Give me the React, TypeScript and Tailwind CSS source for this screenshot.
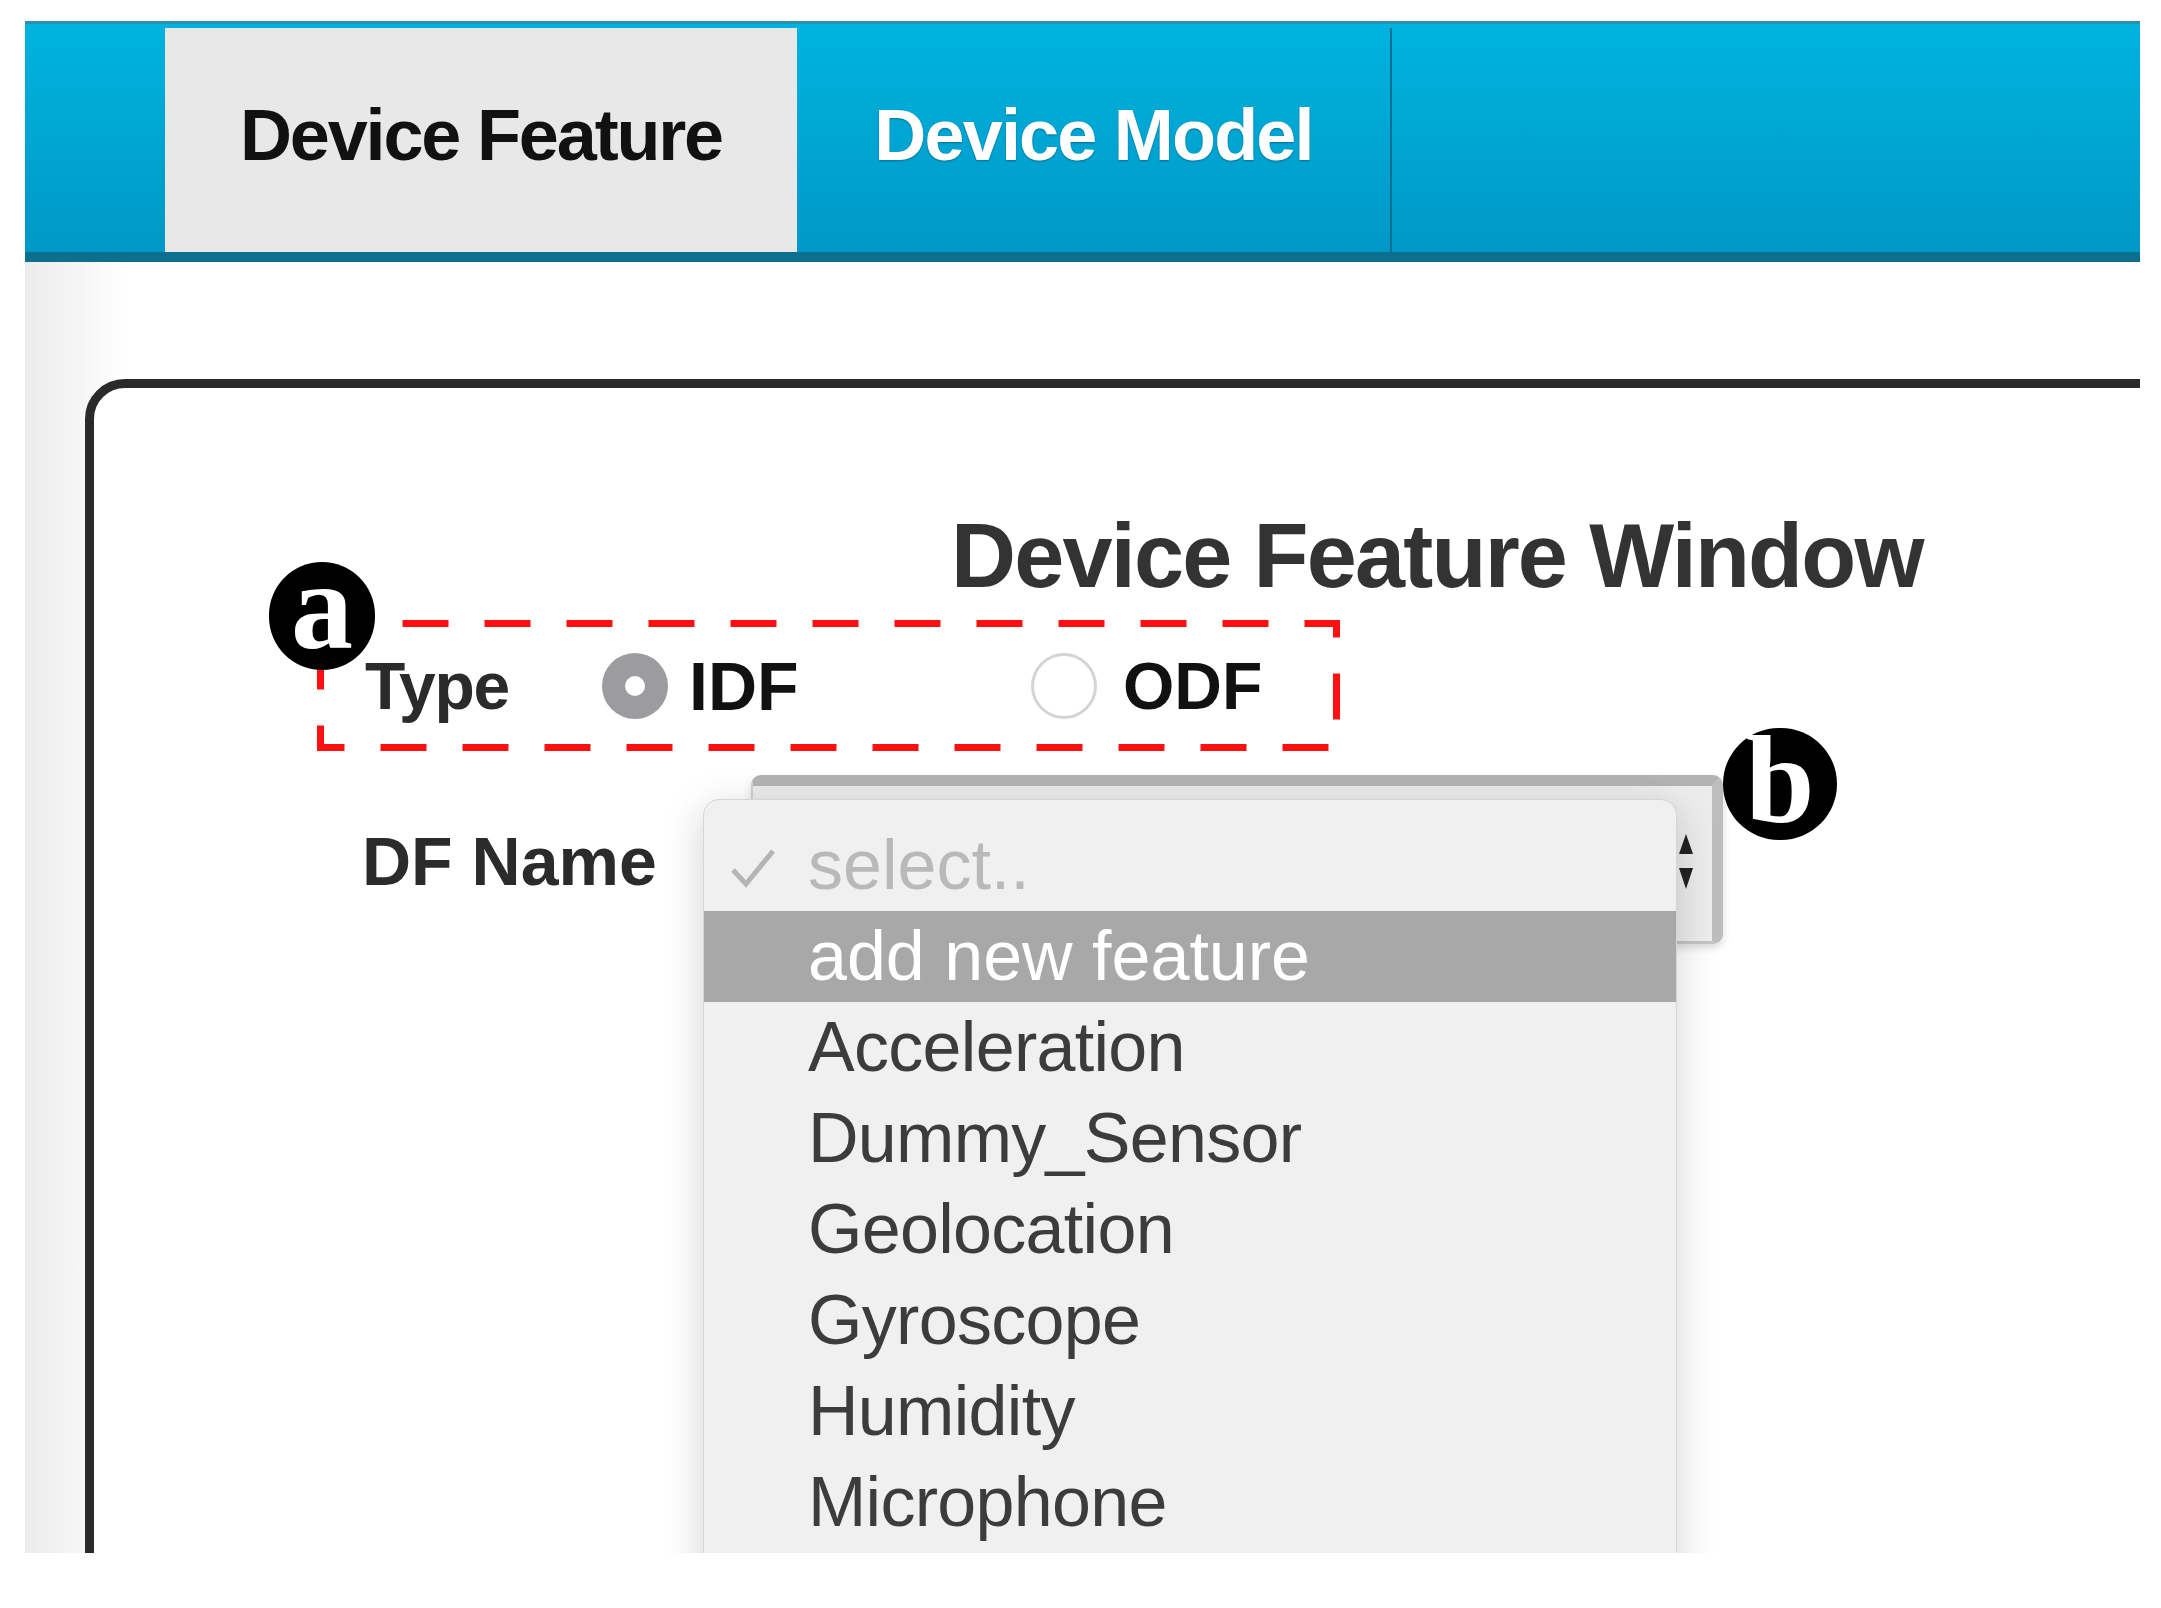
import React from "react";

const SANS = "font-['Liberation_Sans',Arial,sans-serif]";
const SERIF = "font-['Liberation_Serif','Times_New_Roman',serif]";

const FEATURES = [
  "Acceleration",
  "Dummy_Sensor",
  "Geolocation",
  "Gyroscope",
  "Humidity",
  "Microphone",
];

// circled letter used as a figure annotation
const Badge: React.FC<{ letter: string; className?: string }> = ({ letter, className }) => (
  <div
    className={`absolute z-20 flex items-center justify-center rounded-full bg-black text-white font-bold leading-none ${SERIF} ${className ?? ""}`}
  >
    {letter}
  </div>
);

const App: React.FC = () => {
  return (
    <div className={`w-[2161px] h-[1608px] bg-white pl-[25px] pt-[21px] ${SANS}`}>
      <div className="w-[2115px] h-[1532px] overflow-hidden flex flex-col">
        {/* ------------ TOP NAV ------------ */}
        <nav className="h-[241px] shrink-0 flex items-stretch pl-[140px] pt-[4px] border-t-[3px] border-b-[10px] border-t-[#2b8fb0] border-b-[#0b6f8f] bg-linear-to-b from-[#00b3df] to-[#0098c7]">
          <div className="w-[632px] bg-[#e8e8e8] flex items-center justify-center pb-[10px]">
            <span className="text-[72px] font-bold tracking-[-0.03em] text-[#111]">Device Feature</span>
          </div>
          <div className="w-[595px] flex items-center justify-center pb-[10px] border-r-2 border-[#0b6f8f]">
            <span className="text-[72px] font-bold tracking-[-0.025em] text-white [text-shadow:0_1px_2px_rgba(0,60,90,0.5)]">
              Device Model
            </span>
          </div>
        </nav>

        {/* ------------ BODY ------------ */}
        <main className="flex-1 pl-[60px] pt-[117px] bg-linear-to-r from-[#ececec] to-white to-5%">
          <section className="w-[2300px] h-[1400px] bg-white border-[9px] border-[#2a2a2a] rounded-tl-[40px] pl-[223px] flex flex-col">
            {/* Title */}
            <h1 className="ml-[634px] mt-[123px] text-[90px] leading-none font-bold tracking-[-0.02em] text-[#333]">
              Device Feature Window
            </h1>

            {/* Type row (a) */}
            <div className="relative mt-[19px] w-[1023px] h-[131px] flex items-center pl-[48px]">
              <svg className="absolute inset-0 pointer-events-none" width="1023" height="131">
                <rect
                  x="3.5"
                  y="3.5"
                  width="1016"
                  height="124"
                  fill="none"
                  stroke="#ff1010"
                  strokeWidth="7"
                  strokeDasharray="46 36"
                />
              </svg>
              <Badge letter="a" className="left-[-48px] top-[-58px] w-[106px] h-[108px] text-[124px] pb-[18px]" />

              <span className="w-[237px] text-[66px] leading-none font-bold tracking-[-0.02em] text-[#2b2b2b]">Type</span>
              <label className="w-[429px] flex items-center">
                <span className="w-[66px] h-[66px] rounded-full bg-[#9c9ca0] flex items-center justify-center">
                  <span className="w-[20px] h-[20px] rounded-full bg-white" />
                </span>
                <span className="ml-[21px] text-[68px] leading-none font-bold text-[#111]">IDF</span>
              </label>
              <label className="flex items-center">
                <span className="w-[66px] h-[66px] rounded-full bg-white border-[3px] border-[#d4d4d4]" />
                <span className="ml-[26px] text-[66px] leading-none font-bold text-[#111]">ODF</span>
              </label>
            </div>

            {/* DF Name row (b) */}
            <div className="mt-[24px] flex">
              <div className="ml-[45px] w-[389px] pt-[52px]">
                <span className="text-[68px] leading-none font-bold text-[#2b2b2b]">DF Name</span>
              </div>

              <div className="relative w-[972px] h-[169px]">
                {/* native select box behind the open menu */}
                <div className="w-full h-full rounded-[10px] bg-[#ececec] border-l-2 border-t-[11px] border-r-[11px] border-b-[3px] border-l-[#cfcfcf] border-t-[#b3b3b3] border-r-[#bdbdbd] border-b-[#c4c4c4] shadow-[0_4px_8px_rgba(0,0,0,0.15)]" />
                <svg className="absolute left-[927px] top-[59px]" width="16" height="56" viewBox="0 0 16 56">
                  <polygon points="8,0 15,20 1,20" fill="#222" />
                  <polygon points="1,34 15,34 8,55" fill="#222" />
                </svg>
                <Badge letter="b" className="left-[972px] top-[-47px] w-[114px] h-[112px] text-[124px] pb-[6px]" />

                {/* open dropdown menu */}
                <ul className="absolute z-10 left-[-48px] top-[24px] w-[974px] h-[900px] rounded-t-[16px] bg-[#f0f0f0] border border-[#d6d6d6] pt-[20px] shadow-[0_10px_40px_rgba(0,0,0,0.18)]">
                  <li className="relative h-[91px] flex items-center pl-[104px] text-[70px] text-[#b9b9b9]">
                    <svg className="absolute left-[26px] top-[28px]" width="46" height="40" viewBox="0 0 46 40">
                      <polyline points="3,22 16,36 43,3" fill="none" stroke="#b5b5b5" strokeWidth="5" />
                    </svg>
                    select..
                  </li>
                  <li className="h-[91px] flex items-center pl-[104px] text-[70px] bg-[#a8a8a8] text-white">
                    add new feature
                  </li>
                  {FEATURES.map((f) => (
                    <li key={f} className="h-[91px] flex items-center pl-[104px] text-[70px] tracking-[-0.01em] text-[#3c3c3c]">
                      {f}
                    </li>
                  ))}
                </ul>
              </div>
            </div>
          </section>
        </main>
      </div>
    </div>
  );
};

export default App;
